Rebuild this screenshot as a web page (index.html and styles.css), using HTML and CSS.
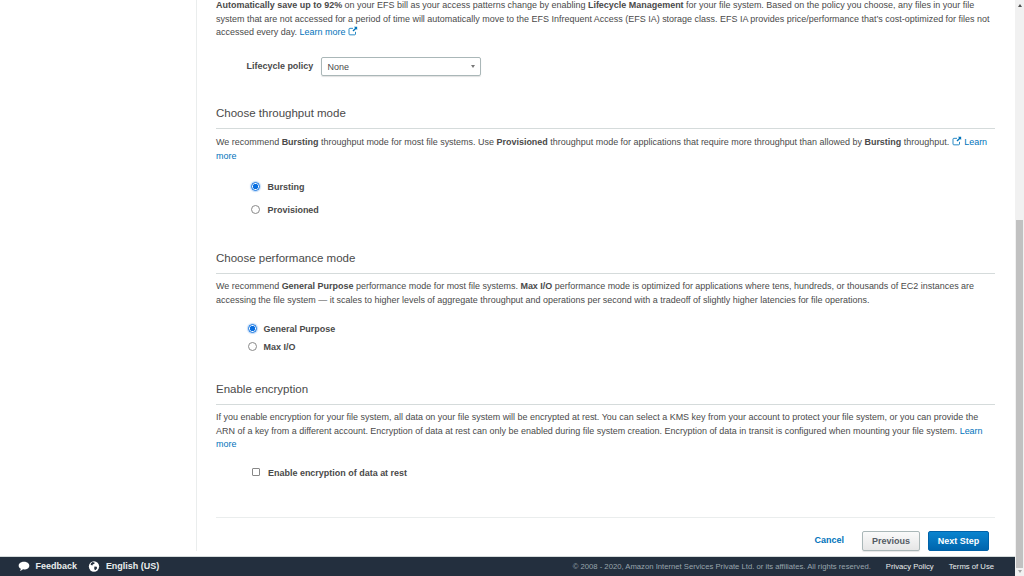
FILE: index.html
```html
<!DOCTYPE html>
<html lang="en">
<head>
<meta charset="utf-8">
<title>Configure file system settings</title>
<link rel="stylesheet" href="styles.css">
</head>
<body>
<div class="page">
  <div class="viewport">
    <div class="workspace">
      <aside class="side"></aside>
      <main class="content">
        <p class="para">
          <b>Automatically save up to 92%</b> on your EFS bill as your access patterns change by enabling <b>Lifecycle Management</b> for your file system. Based on the policy you choose, any files in your file<br>
          system that are not accessed for a period of time will automatically move to the EFS Infrequent Access (EFS IA) storage class. EFS IA provides price/performance that’s cost-optimized for files not<br>
          accessed every day. <a class="link" href="#">Learn more <svg class="ext" viewBox="0 0 12 12"><path d="M9 7v2.6c0 .6-.4 1-1 1H2.2c-.6 0-1-.4-1-1V3.8c0-.6.4-1 1-1H6" fill="none" stroke="currentColor" stroke-width="1"/><path d="M7.2 1H11v3.8L9.7 3.5 6.6 6.6 5.4 5.4l3.1-3.1z" fill="currentColor"/></svg></a>
        </p>
        <div class="policy">
          <label class="policy-label">Lifecycle policy</label>
          <div class="select"><span>None</span><i class="caret"></i></div>
        </div>

        <h2 class="heading h-through">Choose throughput mode</h2>
        <p class="para">
          We recommend <b>Bursting</b> throughput mode for most file systems. Use <b>Provisioned</b> throughput mode for applications that require more throughput than allowed by <b>Bursting</b> throughput. <a class="link" href="#"><svg class="ext" viewBox="0 0 12 12"><path d="M9 7v2.6c0 .6-.4 1-1 1H2.2c-.6 0-1-.4-1-1V3.8c0-.6.4-1 1-1H6" fill="none" stroke="currentColor" stroke-width="1"/><path d="M7.2 1H11v3.8L9.7 3.5 6.6 6.6 5.4 5.4l3.1-3.1z" fill="currentColor"/></svg> Learn<br>more</a>
        </p>
        <div class="options opts-through">
          <div class="option"><span class="radio on"></span><span class="opt-text">Bursting</span></div>
          <div class="option"><span class="radio"></span><span class="opt-text">Provisioned</span></div>
        </div>

        <h2 class="heading h-perf">Choose performance mode</h2>
        <p class="para">
          We recommend <b>General Purpose</b> performance mode for most file systems. <b>Max I/O</b> performance mode is optimized for applications where tens, hundreds, or thousands of EC2 instances are<br>
          accessing the file system — it scales to higher levels of aggregate throughput and operations per second with a tradeoff of slightly higher latencies for file operations.
        </p>
        <div class="options opts-perf">
          <div class="option"><span class="radio on"></span><span class="opt-text">General Purpose</span></div>
          <div class="option"><span class="radio"></span><span class="opt-text">Max I/O</span></div>
        </div>

        <h2 class="heading h-enc">Enable encryption</h2>
        <p class="para">
          If you enable encryption for your file system, all data on your file system will be encrypted at rest. You can select a KMS key from your account to protect your file system, or you can provide the<br>
          ARN of a key from a different account. Encryption of data at rest can only be enabled during file system creation. Encryption of data in transit is configured when mounting your file system. <a class="link" href="#">Learn<br>more</a>
        </p>
        <div class="check-row"><span class="check"></span><span class="opt-text">Enable encryption of data at rest</span></div>

        <div class="actions">
          <a class="cancel" href="#">Cancel</a>
          <button class="btn btn-prev">Previous</button>
          <button class="btn btn-next">Next Step</button>
        </div>
      </main>
    </div>
    <footer class="footer">
      <div class="foot-left">
        <span class="foot-item"><svg class="foot-icon" viewBox="0 0 14 12"><path d="M7 .6c3.5 0 6.2 1.9 6.2 4.4S10.500 9.400 7 9.400c-.5 0-1 0-1.400-.1C4.700 10.400 3.400 11 2.200 11.200c.6-.7 1-1.500 1.100-2.500C1.700 7.900.8 6.600.8 5 .8 2.500 3.500.6 7 .6z" fill="#fff"/></svg>Feedback</span>
        <span class="foot-item"><svg class="foot-icon globe" viewBox="0 0 12 12"><circle cx="6" cy="6" r="5.600" fill="#fff"/><path d="M4.500 1.200 6.800 1.900 6.200 3.300 4.800 3.500 4.200 5 2.300 4.200 2.600 2.700zM6.500 6 9 6.300 9.400 7.800 7.800 9.900 6.800 9.800 6.200 8z" fill="#232f3e"/></svg>English (US)</span>
      </div>
      <div class="foot-right">
        <span class="copy">© 2008 - 2020, Amazon Internet Services Private Ltd. or its affiliates. All rights reserved.</span>
        <a class="foot-link" href="#">Privacy Policy</a>
        <a class="foot-link" href="#">Terms of Use</a>
      </div>
    </footer>
  </div>
  <div class="scrollbar">
    <i class="arrow up"></i>
    <div class="track"><div class="thumb"></div></div>
    <i class="arrow down"></i>
  </div>
</div>
</body>
</html>
```
FILE: styles.css
```css
html, body { margin: 0; padding: 0; height: 100%; overflow: hidden; }
body { font-family: "Liberation Sans", Arial, sans-serif; font-size: 8.970px; line-height: 13.5px; color: #4a4a4a; background: #fff; }
.page { display: flex; width: 1024px; height: 576px; overflow: hidden; }
.viewport { flex: 1; min-width: 0; display: flex; flex-direction: column; }
.workspace { flex: 1; min-height: 0; display: flex; overflow: hidden; }
.side { width: 196px; height: 551px; border-right: 1px solid #eaeded; flex: none; }
.content { width: 779px; margin-left: 19px; margin-top: -1px; flex: none; }
.para { margin: 0; white-space: nowrap; }
.link { color: #0073bb; text-decoration: none; }
.ext { width: 10px; height: 10px; vertical-align: -1px; }
.policy { display: flex; align-items: center; margin-top: 17.500px; padding-left: 30.500px; }
.policy-label { font-weight: bold; width: 74px; white-space: nowrap; }
.select { height: 17px; border: 1px solid #aab7b8; border-radius: 2px; display: flex; align-items: center; justify-content: space-between; padding: 0 5px 0 6px; width: 147px; box-shadow: 0 1px 1px rgba(0,0,0,.12); }
.select span { padding-top: 2px; }
.caret { width: 0; height: 0; border-left: 2px solid transparent; border-right: 2px solid transparent; border-top: 3px solid #777; }
.heading { font-size: 11.500px; font-weight: normal; line-height: 16px; color: #4a4a4a; margin: 0 0 6px; padding-bottom: 7px; border-bottom: 1px solid #d5dbdb; }
.h-through { margin-top: 29px; margin-bottom: 7px; }
.h-perf { margin-top: 32px; margin-bottom: 6.500px; }
.h-enc { margin-top: 27px; }
.options { display: flex; flex-direction: column; }
.opts-through { padding-left: 35px; margin-top: 18px; gap: 9.500px; }
.opts-perf { padding-left: 32px; margin-top: 15.500px; gap: 4.500px; }
.option { display: flex; align-items: center; height: 13.500px; }
.opt-text { font-weight: bold; white-space: nowrap; }
.radio { width: 7px; height: 7px; border: 1px solid #8a8a8a; border-radius: 50%; background: #fff; flex: none; margin-right: 7.500px; position: relative; top: -1px; }
.radio.on { border-color: #0a6fe0; background: radial-gradient(circle, #0a6fe0 0 2.500px, #fff 3px); box-shadow: 0 0 1px 1px rgba(10,111,224,.25); }
.opts-perf .radio { margin-right: 6.500px; }
.check-row { display: flex; align-items: center; padding-left: 35.500px; margin-top: 15px; }
.check { width: 6px; height: 6px; border: 1px solid #888; border-radius: 1px; margin-right: 8.500px; flex: none; position: relative; top: -1px; }
.actions { display: flex; align-items: center; justify-content: flex-end; margin-top: 37px; padding: 13px 6px 0 0; border-top: 1px solid #eaeded; }
.cancel { color: #0073bb; font-weight: bold; margin-right: 18px; text-decoration: none; }
.btn { font-family: inherit; font-size: 8.970px; font-weight: bold; height: 20px; padding: 0; border-radius: 2px; border: 1px solid; }
.btn-prev { width: 58px; color: #545b64; border-color: #aab7b8; background: linear-gradient(#fafafa, #e6e6e6); margin-right: 8px; box-shadow: 0 1px 1px rgba(0,0,0,.1); }
.btn-next { width: 61px; color: #fff; border-color: #0062a8; background: linear-gradient(#0a84cf, #0065ad); }
.footer { height: 20px; flex: none; background: #232f3e; border-top: 1px solid #d5dbdb; box-sizing: border-box; display: flex; align-items: center; justify-content: space-between; padding: 0 21px 0 18px; color: #fff; }
.foot-left { display: flex; gap: 13px; font-weight: bold; color: #eaeded; }
.foot-item { display: flex; align-items: center; }
.foot-icon { width: 12px; height: 11px; margin-right: 5.500px; }
.globe { margin-right: 6px; margin-left: -2px; }
.foot-right { display: flex; align-items: center; font-size: 7.700px; }
.copy { color: #99a5ad; margin-right: 15px; }
.foot-link { color: #eaeded; text-decoration: none; margin-left: 15px; }
.copy + .foot-link { margin-left: 0; }
.scrollbar { width: 9px; flex: none; background: #f1f1f1; display: flex; flex-direction: column; align-items: center; }
.arrow { width: 0; height: 0; border-left: 2px solid transparent; border-right: 2px solid transparent; flex: none; }
.arrow.up { border-bottom: 3px solid #505050; margin: 4px 0 2px; }
.arrow.down { border-top: 3px solid #a3a3a3; margin: 2px 0 3px; }
.track { flex: 1; width: 100%; display: flex; flex-direction: column; justify-content: flex-end; }
.thumb { width: 7px; height: 348px; margin: 0 auto; background: #c1c1c1; }
```
